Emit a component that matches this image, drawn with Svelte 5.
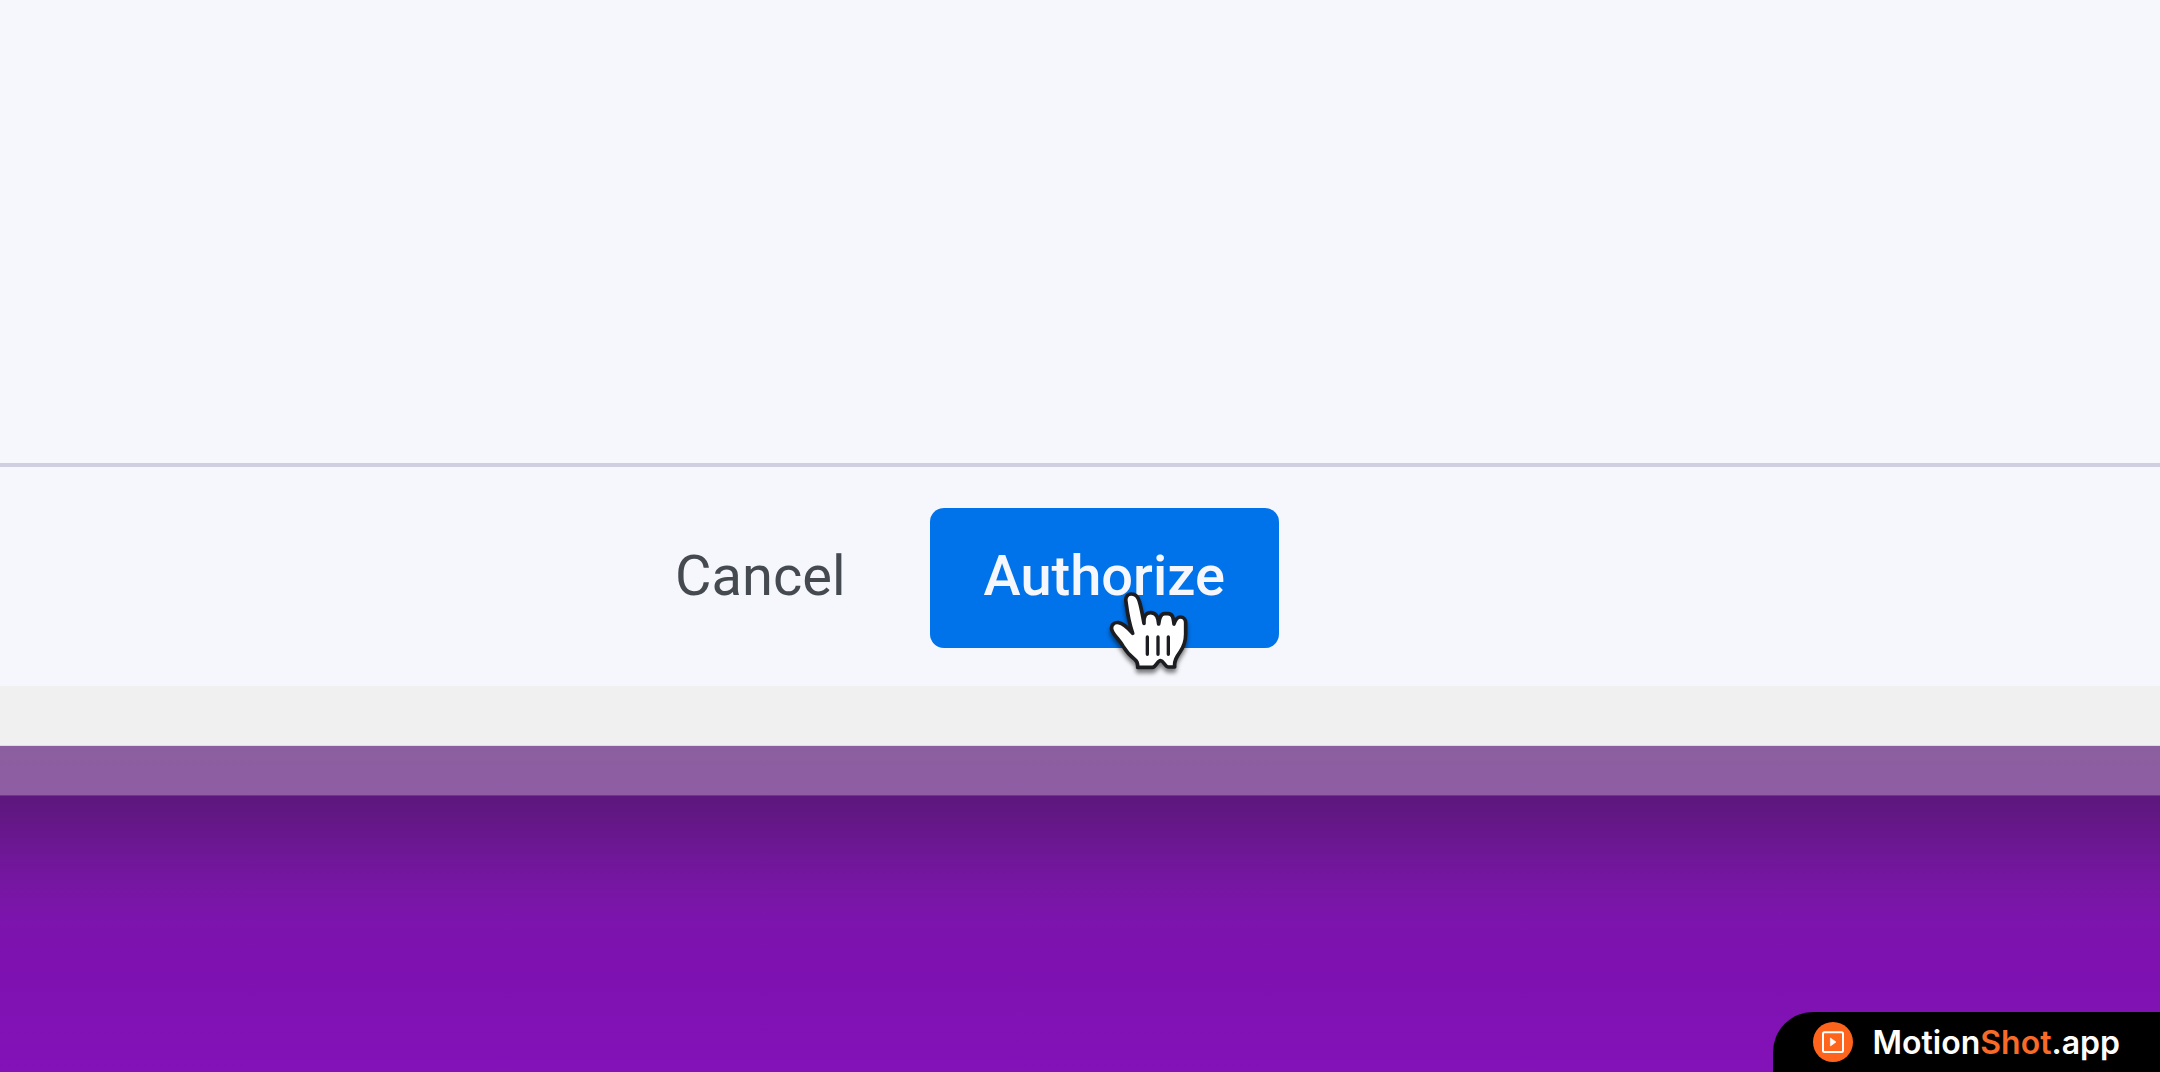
<script>
	let { cancelLabel = 'Cancel', confirmLabel = 'Authorize' } = $props();
</script>

<div class="page">
	<main class="window">
		<div class="content"></div>
		<footer class="actions">
			<button class="cancel" type="button">{cancelLabel}</button>
			<div class="confirm">
				<button class="authorize" type="button">{confirmLabel}</button>
				<svg class="pointer" viewBox="0 0 390 360" aria-hidden="true">
					<path
						d="M155 72 C142 71 135 82 138 96 C142 128 149 164 158 190 C146 177 132 160 116 158 C101 155 91 168 96 181 C102 197 119 210 130 230 C142 250 152 259 165 269 C171 274 174 280 173 292 H217 C228 292 232 272 242 272 C251 272 254 291 266 291 H284 C282 272 290 260 300 246 C313 228 317 213 317 193 V158 C317 147 310 141 301 141 C291 141 286 150 282 162 C280 147 280 131 264 131 H254 C241 131 238 144 236 162 C234 145 231 128 212 128 C197 128 191 139 192 160 C187 134 184 113 178 94 C174 80 167 72 155 72 Z"
						fill="#fff"
						stroke="#1b1d20"
						stroke-width="11"
						stroke-linejoin="round"
					/>
					<path
						d="M202 201 V253 M234 201 V253 M265 201 V253"
						fill="none"
						stroke="#1b1d20"
						stroke-width="10"
						stroke-linecap="round"
					/>
				</svg>
			</div>
		</footer>
		<div class="strip"></div>
		<div class="frame"></div>
	</main>

	<div class="backdrop">
		<a class="badge" href="#motionshot">
			<svg class="logo" viewBox="0 0 40 40" aria-hidden="true">
				<circle cx="20" cy="20" r="20" fill="#ff641c" />
				<rect x="10" y="10.3" width="20" height="19.7" rx="1.5" fill="none" stroke="#fff" stroke-width="2" />
				<path d="M17.4 16 V24 L23 20 Z" fill="#fff" stroke="#fff" stroke-width="0.6" stroke-linejoin="round" />
			</svg>
			<span class="brand">Motion<span class="accent">Shot</span>.app</span>
		</a>
	</div>
</div>

<style>
	:global(body) {
		margin: 0;
	}

	.page {
		display: flex;
		flex-direction: column;
		min-height: 100vh;
		background-color: #8312b8;
	}

	.window {
		display: flex;
		flex-direction: column;
		flex: 1;
	}

	.content {
		flex: 1;
		background-color: #f5f7fc;
	}

	.actions {
		display: flex;
		justify-content: center;
		align-items: center;
		gap: 30px;
		padding: 41px 260px 38px 0;
		border-top: 4px solid #cfcfdf;
		background-color: #f5f7fc;
	}

	button {
		height: 140px;
		padding: 0 54px 4px;
		border: none;
		border-radius: 14px;
		font-family: Roboto, sans-serif;
		font-size: 56px;
		cursor: pointer;
	}

	.cancel {
		background-color: transparent;
		color: #454950;
	}

	.confirm {
		position: relative;
	}

	.authorize {
		background-color: #0073eb;
		color: #f5f7fc;
		font-weight: 500;
	}

	/* hand sits over the lower part of the label */
	.pointer {
		position: absolute;
		left: 150px;
		top: 62px;
		width: 130px;
		height: 120px;
		filter: drop-shadow(0 4px 2px rgb(0 0 0 / 0.5));
		pointer-events: none;
	}

	.strip {
		height: 59px;
		background-color: #f0f0f0;
	}

	.frame {
		height: 49px;
		border-top: 1px solid #e2d8e8;
		border-bottom: 1px solid #71368b;
		background: linear-gradient(#8b5f9f, #8f5da4);
	}

	.backdrop {
		display: flex;
		justify-content: flex-end;
		align-items: flex-end;
		height: 276px;
		background: linear-gradient(
			#5d177d 0,
			#641786 24px,
			#6e1796 56px,
			#7716a3 90px,
			#7c14ad 126px,
			#7e11b0 164px,
			#8312b8 100%
		);
	}

	.badge {
		display: flex;
		align-items: center;
		gap: 20px;
		height: 60px;
		padding: 0 40px;
		border-top-left-radius: 40px;
		background-color: #000;
		color: #fff;
		font-family: Inter, sans-serif;
		font-size: 32px;
		font-weight: 600;
		text-decoration: none;
	}

	.logo {
		width: 40px;
		height: 40px;
	}

	.accent {
		color: #f86a27;
	}
</style>
